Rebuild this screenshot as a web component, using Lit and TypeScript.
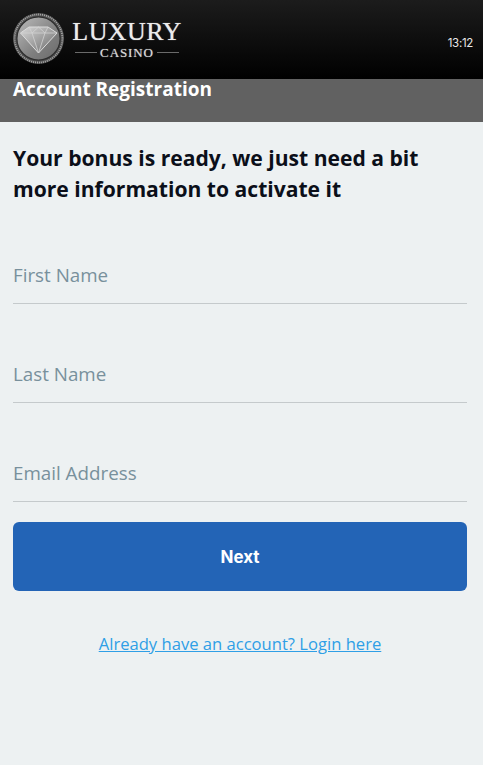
import { LitElement, html, css, svg } from "lit";
import { customElement } from "lit/decorators.js";

@customElement("app-root")
export class AppRoot extends LitElement {
  static styles = css`
    :host { display: block; width: 483px; height: 765px; background: #edf1f2; font-family: "Open Sans", "Noto Sans", sans-serif; overflow: hidden; }
    .top { height: 79px; box-sizing: border-box; background: linear-gradient(#1c1c1c, #000); display: flex; align-items: center; padding: 0 10px 1px 13px; gap: 7px; }
    .medal { width: 52px; height: 52px; flex: none; display: block; }
    .brand { display: flex; flex-direction: column; align-items: center; width: 110px; color: #ececec; font-family: "Liberation Serif", serif; }
    .lux { font-size: 26px; line-height: 26px; letter-spacing: 0.4px; text-shadow: 0 0 1px #aaa; }
    .casino-row { display: flex; align-items: center; gap: 3px; width: 104px; margin-top: 1px; }
    .rule { flex: 1; height: 1px; background: #6a6a6a; }
    .casino { font-size: 13px; line-height: 13px; letter-spacing: 0.9px; color: #d8d8d8; text-shadow: 0 0 1px #999; }
    .time { margin-left: auto; font: 400 11.5px/14px Inter, sans-serif; letter-spacing: -0.3px; color: #e8e8e8; padding-top: 7px; }
    .bar { height: 43px; background: #616161; color: #fff; font-size: 19px; font-weight: 700; line-height: 20px; padding: 0 13px; box-sizing: border-box; }
    main { padding: 0 16px 0 13px; }
    h1 { margin: 20px 0 0; font-size: 21.1px; line-height: 31px; font-weight: 700; color: #0b0f19; }
    .field { height: 99px; display: flex; align-items: flex-end; }
    .field.first { height: 100px; }
    input { width: 100%; height: 48px; box-sizing: border-box; background: none; border: 0; border-bottom: 1px solid #c5cacc; padding: 0 0 10px; font: 400 18.8px "Open Sans", sans-serif; outline: none; color: #333; }
    input::placeholder { color: #78909c; opacity: 1; }
    button { display: block; width: 100%; height: 69px; margin-top: 20px; background: #2364b6; color: #fff; border: 0; border-radius: 6px; font: 700 17px Inter, sans-serif; padding: 0; }
    .login { display: block; margin-top: 41px; text-align: center; font-size: 16.6px; line-height: 24px; color: #2f9fe6; }
  `;
  render() {
    return html`
      <header class="top">
        <svg class="medal" viewBox="0 0 52 52" aria-hidden="true">
          <defs>
            <linearGradient id="disc" x1="0" y1="0" x2="1" y2="1"><stop offset="0" stop-color="#bcbcbc"/><stop offset=".6" stop-color="#7f7f7f"/><stop offset="1" stop-color="#6a6a6a"/></linearGradient>
            <linearGradient id="gem" x1="0" y1="0" x2="1" y2="1"><stop offset="0" stop-color="#d8d8d8"/><stop offset=".5" stop-color="#a0a0a0"/><stop offset="1" stop-color="#686868"/></linearGradient>
          </defs>
          <circle cx="25.5" cy="25.5" r="25.5" fill="#4e4e4e"/>
          <circle cx="25.5" cy="25.5" r="24" fill="none" stroke="#a8a8a8" stroke-width="1.8" stroke-dasharray="1 1"/>
          <circle cx="25.5" cy="25.5" r="21.6" fill="url(#disc)" stroke="#2e2e2e" stroke-width="1.2"/>
          ${svg`<path d="M7.5 20 L16 14 H35 L44 20 L25.5 40 Z" fill="url(#gem)" stroke="#dcdcdc" stroke-width="1"/>
          <path d="M7.5 20 H44 M16 14 L19 20 L25.5 14 L32 20 L35 14 M19 20 L25.5 40 L32 20" fill="none" stroke="#d2d2d2" stroke-width=".8"/>`}
        </svg>
        <div class="brand">
          <div class="lux">LUXURY</div>
          <div class="casino-row"><span class="rule"></span><span class="casino">CASINO</span><span class="rule"></span></div>
        </div>
        <div class="time">13:12</div>
      </header>
      <div class="bar">Account Registration</div>
      <main>
        <h1>Your bonus is ready, we just need a bit more information to activate it</h1>
        <div class="field first"><input placeholder="First Name" /></div>
        <div class="field"><input placeholder="Last Name" /></div>
        <div class="field"><input placeholder="Email Address" /></div>
        <button>Next</button>
        <a class="login" href="#" @click=${(e: Event) => e.preventDefault()}>Already have an account? Login here</a>
      </main>
    `;
  }
}
